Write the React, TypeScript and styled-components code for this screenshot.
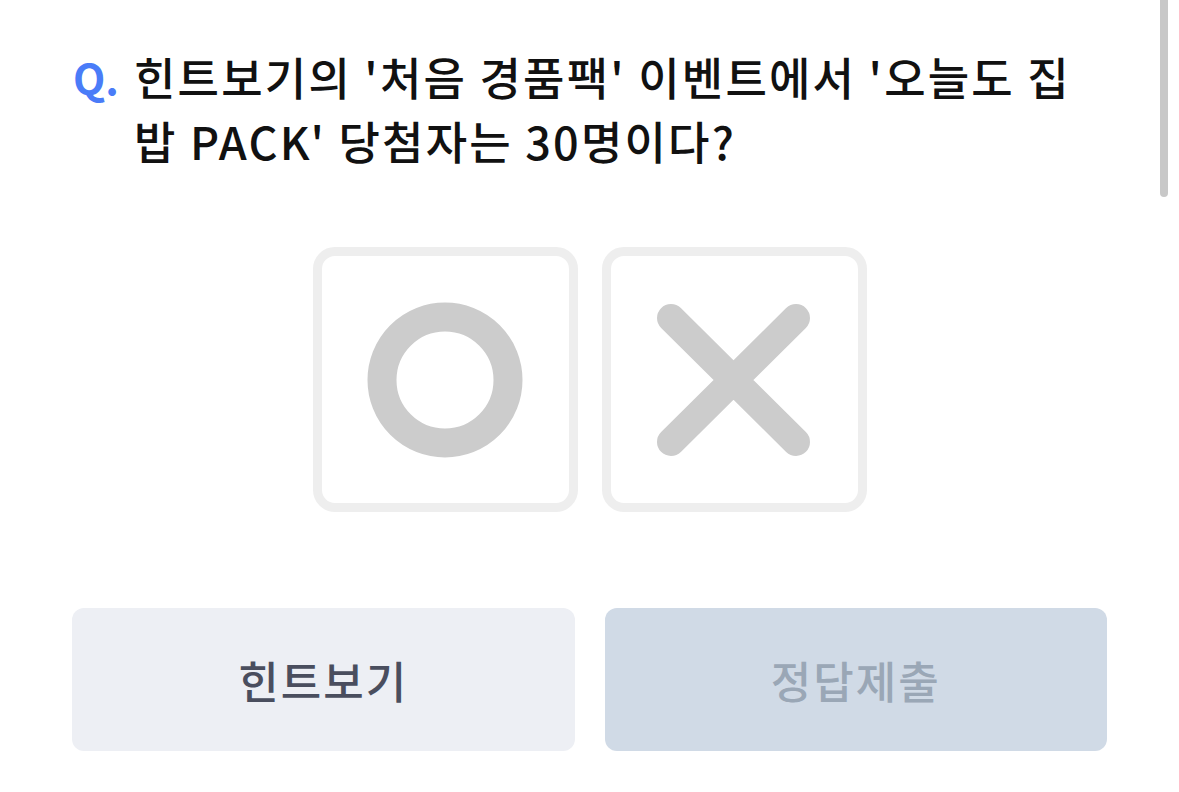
import styled, { createGlobalStyle } from "styled-components"

const GlobalStyle = createGlobalStyle`
    html, body {
        margin: 0;
        padding: 0;
        background: #ffffff;
    }
    body {
        font-family: "Noto Sans CJK KR", "Noto Sans", sans-serif;
        overflow: hidden;
    }
`

const Page = styled.div`
    position: relative;
    width: 1179px;
    height: 792px;
    box-sizing: border-box;
    padding: 45px 72px 0;
    display: flex;
    flex-direction: column;
`

const Question = styled.div`
    display: flex;
    align-items: flex-start;
    gap: 15px;
    padding-left: 1px;
    padding-right: 20px;
`

const QMark = styled.span`
    font-size: 42px;
    line-height: 64px;
    font-weight: 700;
    color: #4a7cf8;
    flex-shrink: 0;
`

const QText = styled.p`
    margin: 0;
    font-size: 45px;
    line-height: 64px;
    font-weight: 500;
    letter-spacing: 2.2px;
    color: #111111;
`

const Choices = styled.div`
    display: flex;
    justify-content: center;
    gap: 24px;
    margin-top: 74px;
`

const ChoiceBox = styled.button`
    width: 265px;
    height: 265px;
    box-sizing: border-box;
    border: 9px solid #eeeeee;
    border-radius: 22px;
    background: #ffffff;
    display: flex;
    align-items: center;
    justify-content: center;
    padding: 0;
    cursor: pointer;
`

const Actions = styled.div`
    display: grid;
    grid-template-columns: 1fr 1fr;
    gap: 30px;
    margin-top: 96px;
`

const ActionButton = styled.button<{ $disabled?: boolean }>`
    height: 143px;
    border: none;
    border-radius: 12px;
    font-family: "Noto Sans CJK KR", "Noto Sans", sans-serif;
    font-size: 44px;
    font-weight: 500;
    letter-spacing: 2px;
    background: ${p => (p.$disabled ? "#d0dae6" : "#edeff4")};
    color: ${p => (p.$disabled ? "#9aa7b6" : "#4a4e5e")};
    cursor: pointer;
`

const ScrollThumb = styled.div`
    position: absolute;
    top: -6px;
    right: 11px;
    width: 8px;
    height: 203px;
    border-radius: 4px;
    background: #c8c8c8;
`

function CircleIcon () {
    return (
        <svg width="160" height="160" viewBox="0 0 160 160">
            <circle cx="80" cy="80" r="63" fill="none" stroke="#cccccc" strokeWidth="29" />
        </svg>
    )
}

function CrossIcon () {
    return (
        <svg width="160" height="160" viewBox="0 0 160 160">
            <path d="M 17 18 L 142 142 M 142 18 L 17 142" stroke="#cccccc" strokeWidth="28" strokeLinecap="round" />
        </svg>
    )
}

export default function App () {
    return (
        <>
            <GlobalStyle />
            <Page>
                <Question>
                    <QMark>Q.</QMark>
                    <QText>힌트보기의 '처음 경품팩' 이벤트에서 '오늘도 집밥 PACK' 당첨자는 30명이다?</QText>
                </Question>
                <Choices>
                    <ChoiceBox aria-label="O">
                        <CircleIcon />
                    </ChoiceBox>
                    <ChoiceBox aria-label="X">
                        <CrossIcon />
                    </ChoiceBox>
                </Choices>
                <Actions>
                    <ActionButton>힌트보기</ActionButton>
                    <ActionButton $disabled>정답제출</ActionButton>
                </Actions>
                <ScrollThumb />
            </Page>
        </>
    )
}
